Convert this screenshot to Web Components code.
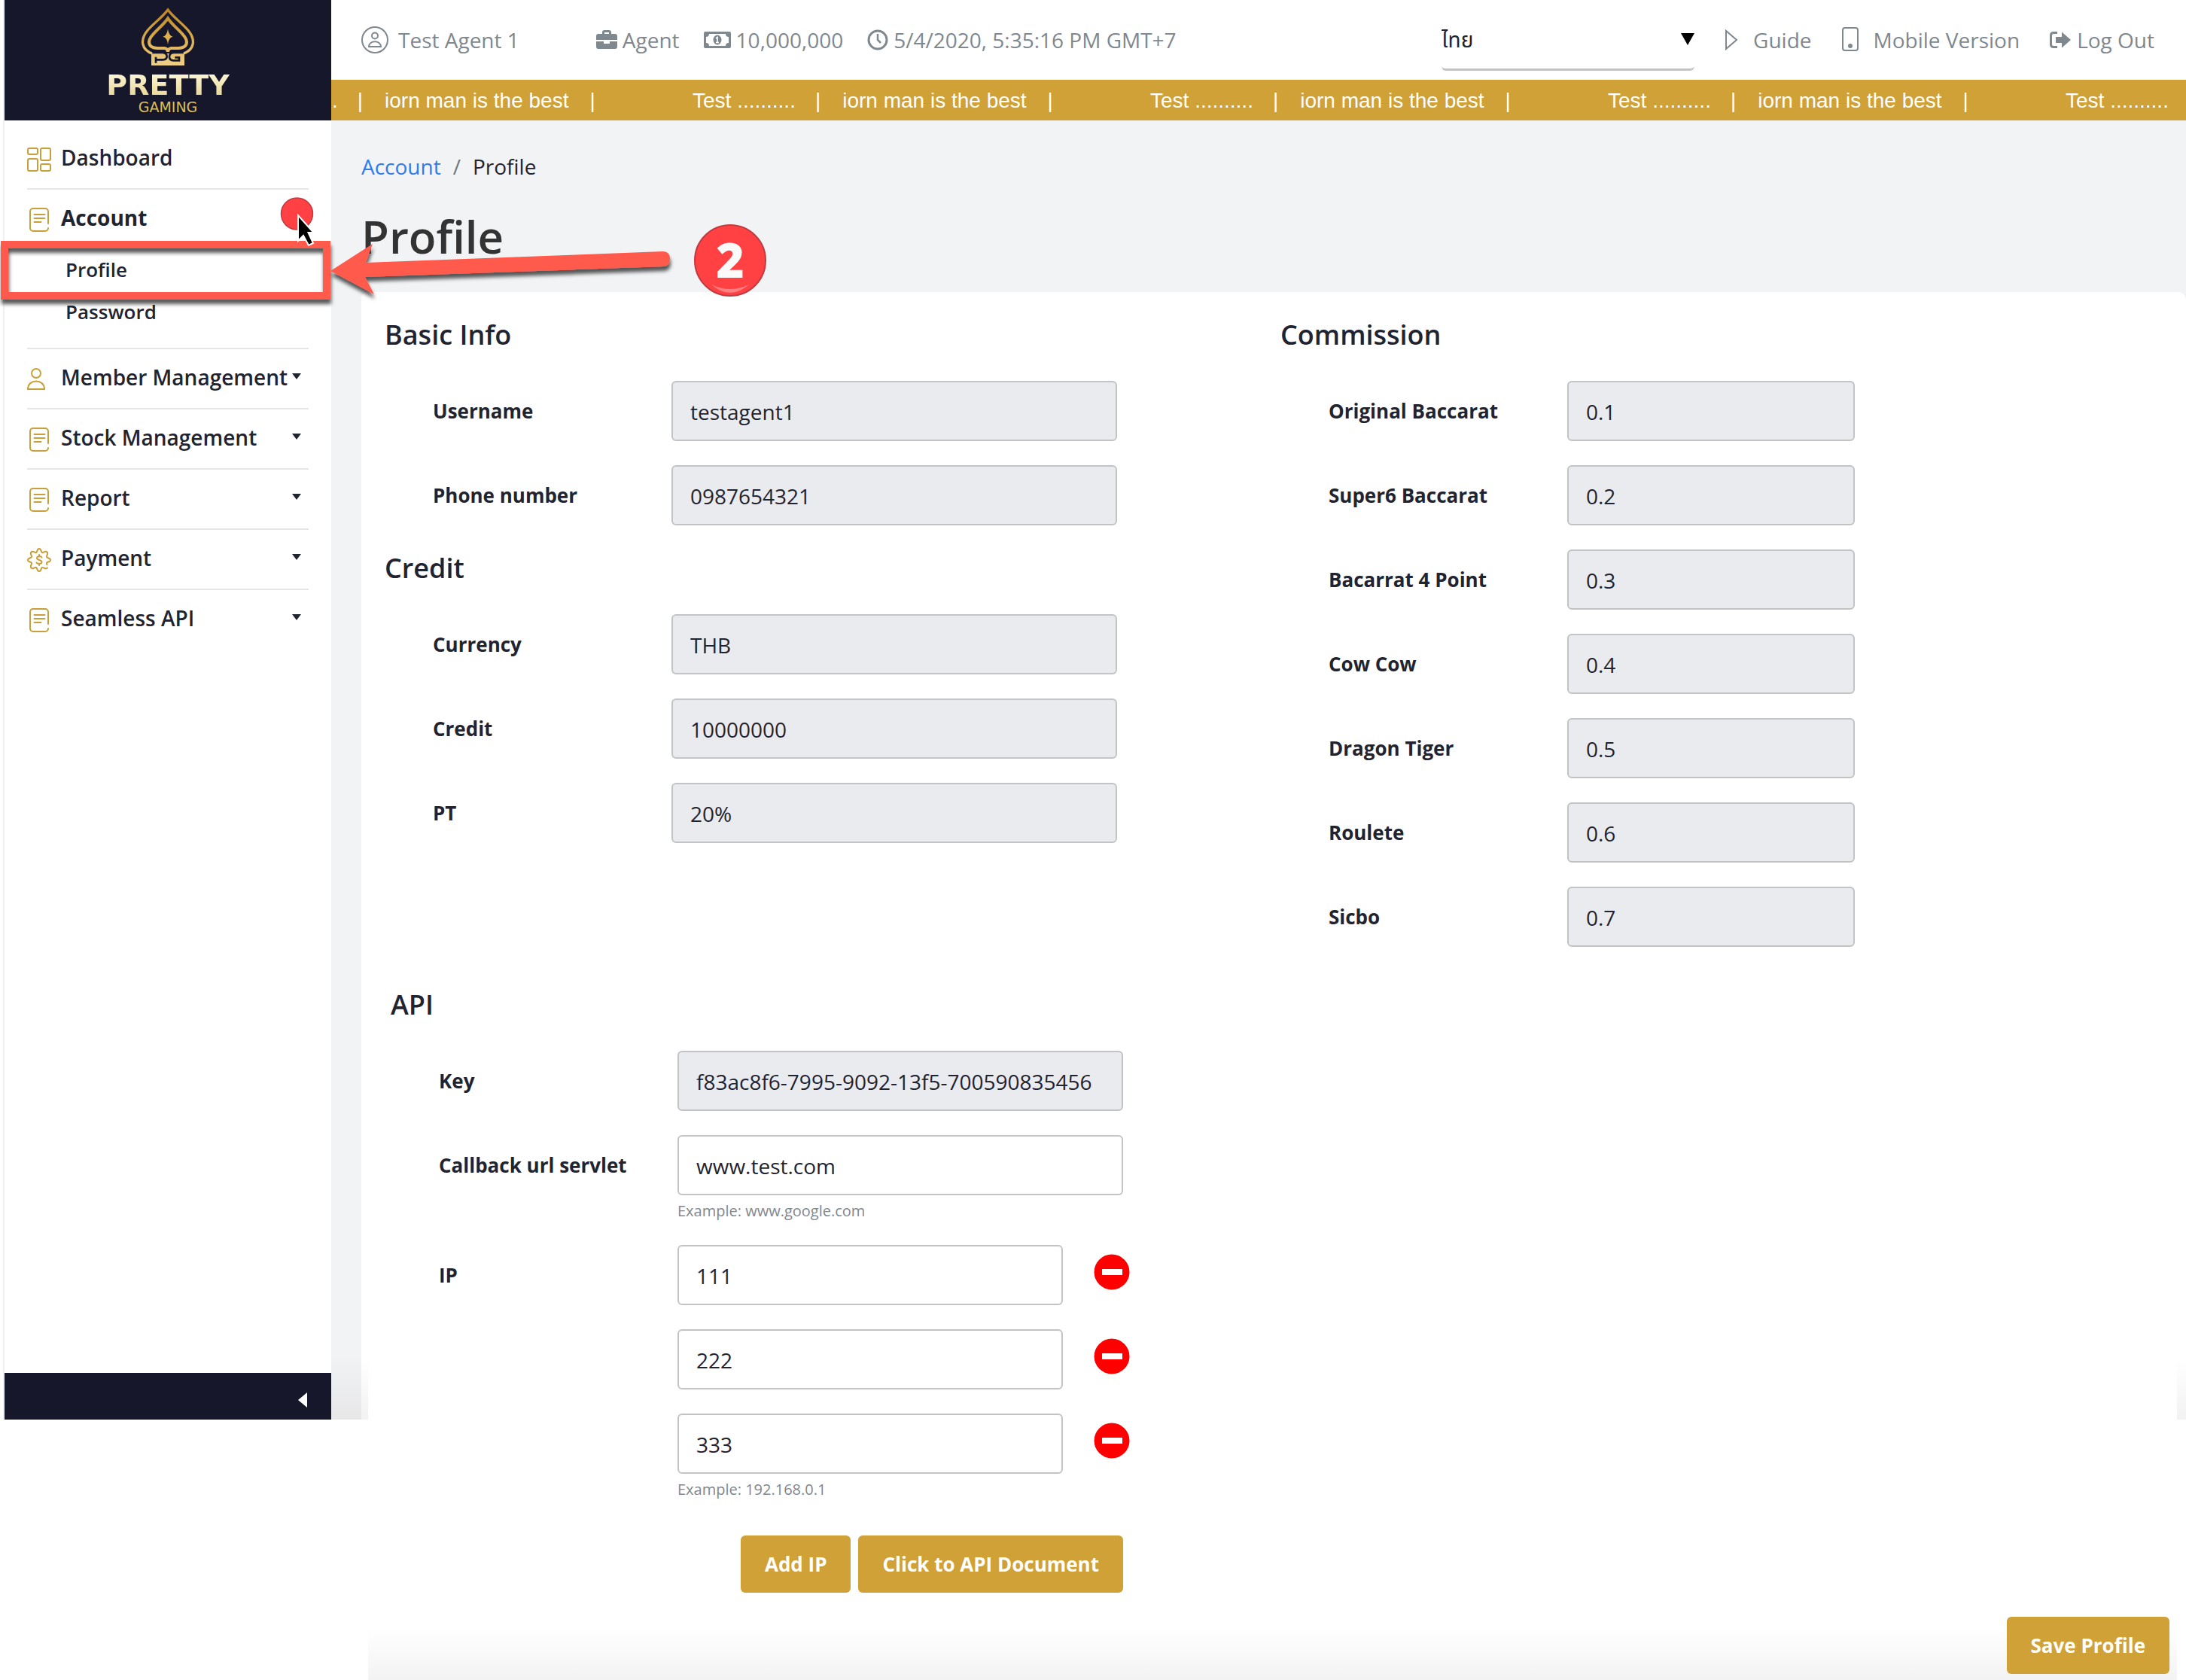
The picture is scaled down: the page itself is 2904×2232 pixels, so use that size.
<!DOCTYPE html>
<html lang="en">
<head>
<meta charset="utf-8">
<title>Pretty Gaming - Profile</title>
<style>
  html { background: #fff; }
  body {
    margin: 0;
    font-family: "Open Sans", "Noto Sans", sans-serif;
    font-size: 28px;
    color: #1f2430;
    --gold: #cfa137;
    --navy: #17172b;
    --muted: #7f888f;
    --canvas: #f1f3f5;
    --line: #c1c3c6;
    --fold: 1886px;
  }
</style>
</head>
<body>
<app-shell>
  <side-nav slot="nav">
    <nav-item icon="grid" label="Dashboard"></nav-item>
    <nav-item icon="doc" label="Account" active>
      <a href="#profile">Profile</a>
      <a href="#password">Password</a>
    </nav-item>
    <nav-item icon="user" label="Member Management" caret></nav-item>
    <nav-item icon="doc" label="Stock Management" caret></nav-item>
    <nav-item icon="doc" label="Report" caret></nav-item>
    <nav-item icon="gear" label="Payment" caret></nav-item>
    <nav-item icon="doc" label="Seamless API" caret></nav-item>
  </side-nav>
  <top-bar slot="top"></top-bar>
  <news-ticker slot="top"></news-ticker>
  <profile-page></profile-page>
</app-shell>
<step-callout></step-callout>

<script>
const define = (name, html, setup) => {
  const template = document.createElement('template');
  template.innerHTML = '<style>:host,*{box-sizing:border-box}</style>' + html;
  customElements.define(name, class extends HTMLElement {
    connectedCallback() {
      if (this.shadowRoot) return;
      const root = this.attachShadow({ mode: 'open' });
      root.append(template.content.cloneNode(true));
      if (setup) setup(this, root);
    }
  });
};

const icons = {
  grid: '<svg width="32" height="32" viewBox="0 0 32 32" fill="none" stroke="currentColor" stroke-width="2"><rect x="1" y="1" width="13" height="8" rx="2"/><rect x="18" y="1" width="13" height="16" rx="2"/><rect x="1" y="15" width="13" height="16" rx="2"/><rect x="18" y="22" width="13" height="9" rx="2"/></svg>',
  doc: '<svg width="32" height="32" viewBox="0 0 32 32" fill="none" stroke="currentColor" stroke-width="2" stroke-linecap="round"><path d="M28 21V5a4 4 0 0 0-4-4H8a4 4 0 0 0-4 4v22a4 4 0 0 0 4 4h16a4 4 0 0 0 4-4"/><path d="M9.500 9h14M9.500 14h14M9.500 19h9"/></svg>',
  user: '<svg width="32" height="32" viewBox="0 0 32 32" fill="none" stroke="currentColor" stroke-width="2"><circle cx="12" cy="8" r="6"/><path d="M1 29C1 15 23 15 23 29Z"/></svg>',
  gear: '<svg width="32" height="32" viewBox="0 0 32 32" fill="none" stroke="currentColor" stroke-width="2" stroke-linecap="round" stroke-linejoin="round"><path d="M27 26.500C24 29 22 25 20 26C18 27 19 31 16 31C13 31 14 27 12 26C10 25 8 29 5.500 26.500C3 24 7 22 6 20C5 18 1 19 1 16C1 13 5 14 6 12C7 10 3 8 5.500 5.500C8 3 10 7 12 6C14 5 13 1 16 1C19 1 18 5 20 6C22 7 24 3 26.500 5.500C29 8 25 10 26 12C27 14 31 13 31 16C31 19 27 18 26 20C25.500 21 26 21.500 26.500 22"/><path d="M19.500 12.500C18.500 10.500 13 10.500 13 13.500C13 16.500 19.500 15.500 19.500 18.700C19.500 21.700 13.500 21.700 12.500 19.500M16 9v2.500M16 20.500V23"/></svg>'
};

define('brand-logo', `
<style>
  :host { display: flex; flex-direction: column; align-items: center; height: 160px; padding-top: 9px; background: var(--navy); }
  svg { display: block; }
  b { font: bold 38px/40px "DejaVu Sans", sans-serif; margin-top: 5px;
      background: linear-gradient(#fffbe0, #e5d18a); -webkit-background-clip: text; background-clip: text; color: transparent; }
  span { font: 19px/18px "DejaVu Sans", sans-serif; color: #dbbd58; }
</style>
<svg width="74" height="79" viewBox="165 26 222 237" fill="none">
  <defs><linearGradient id="g" gradientUnits="userSpaceOnUse" x1="0" y1="30" x2="0" y2="260"><stop offset="0" stop-color="#bb8420"/><stop offset=".5" stop-color="#d8a94a"/><stop offset="1" stop-color="#efd287"/></linearGradient></defs>
  <path d="M276 38C254 68 221 90 196 119C163 158 171 198 215 213V255H337V213C381 198 389 158 356 119C331 90 298 68 276 38Z" stroke="url(#g)" stroke-width="10"/>
  <path d="M276 72C258 98 236 114 217 136C189 166 200 190 234 191H262Q276 193 276 206Q276 193 290 191H318C352 190 363 166 335 136C316 114 294 98 276 72Z" stroke="url(#g)" stroke-width="12"/>
  <path d="M212 212H340V258H212Z" fill="url(#g)"/>
  <path d="M214 209H256Q272 211 272 224Q272 237 256 237H228M228 226V250M338 209H298Q282 211 282 225Q282 240 298 240H321V228H304" stroke="#17172b" stroke-width="8"/>
  <path d="M276 114Q279 142 296 145Q279 148 276 176Q273 148 256 145Q273 142 276 114Z" fill="#e0b050"/>
</svg>
<b>PRETTY</b><span>GAMING</span>`);

define('nav-item', `
<style>
  :host { display: block; border-bottom: 2px solid #e6e6e6; }
  :host(:last-of-type) { border-bottom: 0; }
  .row { display: flex; align-items: center; height: 78px; color: inherit; text-decoration: none; font-weight: 600; padding-right: 10px; }
  :host([active]) .row { font-weight: 700; }
  .icon { width: 45px; height: 34px; padding-top: 2px; color: #c99f3a; }
  .icon svg { display: block; }
  .label { flex: 1; line-height: 74px; padding-bottom: 4px; white-space: nowrap; }
  .caret { display: none; padding-bottom: 6px; }
  :host([caret]) .caret { display: flex; }
  .sub { display: none; padding: 0 0 20px 51px; }
  :host([active]) .sub { display: block; }
  ::slotted(a) { display: block; font-size: 26px; line-height: 56px; font-weight: 600; color: inherit; text-decoration: none; }
</style>
<a class="row" href="#"><span class="icon"></span><span class="label"></span>
<span class="caret"><svg width="12" height="8" viewBox="0 0 12 8"><path d="M0 0H12L6 8Z" fill="#1f2430"/></svg></span></a>
<div class="sub"><slot></slot></div>`, (el, root) => {
  root.querySelector('.icon').innerHTML = icons[el.getAttribute('icon')];
  root.querySelector('.label').textContent = el.getAttribute('label');
});

define('side-nav', `
<style>
  :host { display: flex; flex-direction: column; min-height: var(--fold); margin-left: 4px; border-left: 2px solid #eef0f5; background: #fff; }
  nav { flex: 1; padding: 12px 30px 0; }
  footer { height: 62px; background: var(--navy); display: flex; align-items: center; justify-content: flex-end; padding: 10px 32px 0; }
  button { border: 0; background: none; padding: 0; display: flex; }
</style>
<brand-logo></brand-logo>
<nav><slot></slot></nav>
<footer><button aria-label="Collapse menu"><svg width="12" height="20" viewBox="0 0 12 20"><path d="M12 0V20L0 10Z" fill="#fff"/></svg></button></footer>`);

define('top-bar', `
<style>
  :host { display: flex; align-items: center; justify-content: space-between; height: 106px; background: #fff; color: var(--muted); padding: 0 42px 0 40px; white-space: nowrap; }
  .group { display: flex; align-items: center; }
  .info { gap: 32px; }
  .links { gap: 40px; }
  .item { display: flex; align-items: center; gap: 7px; color: inherit; text-decoration: none; }
  .links .item { gap: 8px; }
  .user { gap: 13px; margin-right: 70px; }
  .links .wide { gap: 20px; }
  svg { display: block; flex: none; }
  .pick { display: flex; align-items: center; height: 82px; width: 336px; border-bottom: 3px solid #c1c3c6; border-radius: 6px; }
  select { appearance: none; flex: 1; min-width: 0; height: 70px; border: 0; padding: 0; background: none; color: #1f2430; font: 28px "Open Sans", "Noto Sans Thai", "Liberation Sans", sans-serif; }
</style>
<div class="group info">
  <span class="item user"><svg width="36" height="36" viewBox="0 0 36 36" fill="none" stroke="currentColor" stroke-width="2"><circle cx="18" cy="18" r="17"/><circle cx="18" cy="12.500" r="4"/><path d="M10 27C10 18 26 18 26 27Z"/></svg>Test Agent 1</span>
  <span class="item"><svg width="28" height="26" viewBox="0 0 28 26" fill="currentColor"><path d="M8 5V3a3 3 0 0 1 3-3h6a3 3 0 0 1 3 3v2h5a3 3 0 0 1 3 3v5H0V8a3 3 0 0 1 3-3ZM11 5h6V3h-6ZM0 15h10v3h8v-3h10v7a3 3 0 0 1-3 3H3a3 3 0 0 1-3-3Z"/></svg>Agent</span>
  <span class="item"><svg width="36" height="22" viewBox="0 0 36 22"><path fill-rule="evenodd" d="M2 0H34a2 2 0 0 1 2 2V20a2 2 0 0 1-2 2H2a2 2 0 0 1-2-2V2a2 2 0 0 1 2-2ZM7 3Q7 7 3 7V15Q7 15 7 19H29Q29 15 33 15V7Q29 7 29 3Z" fill="currentColor"/><ellipse cx="18" cy="11" rx="5.500" ry="6.500" fill="currentColor"/><path d="M16 9L18 7.500V14M16 14.500H20" stroke="#fff" stroke-width="1.600" fill="none"/></svg>10,000,000</span>
  <span class="item"><svg width="28" height="28" viewBox="0 0 28 28" fill="none" stroke="currentColor" stroke-width="3"><circle cx="14" cy="14" r="12"/><path d="M14 6V14L18 18" stroke-width="2.500"/></svg>5/4/2020, 5:35:16 PM GMT+7</span>
</div>
<div class="group links">
  <span class="pick"><select aria-label="Language"><option>ไทย</option></select><svg width="18" height="18" viewBox="0 0 18 18"><path d="M0 1H18L9 17Z" fill="#000"/></svg></span>
  <a class="item wide" href="#guide"><svg width="18" height="30" viewBox="0 0 18 30" fill="none" stroke="currentColor" stroke-width="2"><path d="M2 3V27L16 15Z"/></svg>Guide</a>
  <a class="item wide" href="#mobile"><svg width="22" height="34" viewBox="0 0 22 34" fill="none" stroke="currentColor" stroke-width="2"><rect x="1" y="1" width="20" height="30" rx="3"/><circle cx="11" cy="25" r="2" fill="currentColor"/></svg>Mobile Version</a>
  <a class="item" href="#logout"><svg width="28" height="22" viewBox="0 0 28 22"><path d="M10 1.500H5Q1.500 1.500 1.500 5V17Q1.500 20.500 5 20.500H10" fill="none" stroke="currentColor" stroke-width="3"/><path d="M8 7H16V0.500L28 11L16 21.500V15H8Z" fill="currentColor"/></svg>Log Out</a>
</div>`);

define('news-ticker', `
<style>
  :host { display: flex; height: 54px; padding-top: 2px; overflow: hidden; background: var(--gold); color: #fff; font-family: "Liberation Sans", Arial, sans-serif; line-height: 52px; white-space: nowrap; }
  .track { display: flex; }
  .story { display: flex; flex: none; width: 608px; }
  .story:first-child { width: 480px; padding-left: 1px; }
  i { font-style: normal; padding: 0 29px 0 26px; }
  i:last-child { padding: 0 0 0 28px; }
</style>
<div class="track"></div>`, (el, root) => {
  const story = lead => `<div class="story"><span>${lead}</span><i>|</i><span>iorn man is the best</span><i>|</i></div>`;
  root.querySelector('.track').innerHTML =
    story('.') + story('Test ..........').repeat(3) + '<div class="story"><span>Test ..........</span></div>';
});

define('form-section', `
<style>
  :host { display: block; }
  h2 { margin: 0 0 36px; font-size: 36px; line-height: 50px; font-weight: 600; }
  .rows { display: flex; flex-direction: column; gap: 32px; padding-left: 64px; }
</style>
<h2></h2><div class="rows"><slot></slot></div>`, (el, root) => {
  root.querySelector('h2').textContent = el.getAttribute('heading');
});

define('form-field', `
<style>
  :host { display: flex; align-items: flex-start; }
  label { flex: none; width: 317px; font-size: 26px; line-height: 80px; font-weight: 700; }
  .box { flex: 0 1 var(--field-width, 592px); min-width: 0; }
  input { display: block; width: 100%; height: 80px; padding: 2px 23px 0; border: 2px solid var(--line); border-radius: 6px; background: #fff; font: inherit; color: inherit; }
  input:read-only { background: #e9ebef; }
  small { display: block; margin-top: 8px; font-size: 20px; line-height: 26px; color: var(--muted); }
  small:empty { display: none; }
  button { display: none; margin: 12px 0 0 41px; padding: 0; border: 0; background: none; }
  :host([removable]) button { display: block; }
  svg { display: block; }
</style>
<label for="control"></label>
<div class="box"><input id="control"><small></small></div>
<button aria-label="Remove IP"><svg width="48" height="48" viewBox="0 0 48 48"><circle cx="24" cy="24" r="23.500" fill="#f00"/><rect x="11" y="20" width="27" height="8" fill="#fff"/></svg></button>`, (el, root) => {
  const input = root.querySelector('input');
  root.querySelector('label').textContent = el.getAttribute('label') || '';
  if (!el.hasAttribute('label')) input.setAttribute('aria-label', 'IP');
  input.value = el.getAttribute('value');
  input.readOnly = el.hasAttribute('locked');
  root.querySelector('small').textContent = el.getAttribute('hint') || '';
});

define('gold-button', `
<style>
  :host { display: block; }
  button { display: block; height: 76px; padding: 0 32px; border: 0; border-radius: 6px; background: var(--gold); color: #fff; font: inherit; font-size: 26px; font-weight: 700; white-space: nowrap; }
</style>
<button type="button"><slot></slot></button>`);

define('profile-page', `
<style>
  :host { display: block; padding: 40px 0 0 40px; background: linear-gradient(var(--canvas), var(--canvas) 1640px, #e7e7e8) no-repeat 0 0 / 100% calc(var(--fold) - 160px); }
  .crumbs { display: flex; gap: 16px; line-height: 42px; }
  .crumbs a { color: #2f7bea; text-decoration: none; }
  .crumbs i { font-style: normal; color: #6f7780; }
  h1 { margin: 36px 0 38px; font-size: 60px; line-height: 72px; font-weight: 600; color: #333; }
  .card { border-radius: 8px 10px 0 0; padding: 32px 13px 8px 31px;
    background:
      linear-gradient(#fff, #f2f2f2) no-repeat 0 1418px / 9px 80px,
      linear-gradient(#fff, #f2f2f2) no-repeat 100% 1418px / 12px 80px,
      linear-gradient(#fff, #f3f3f3) no-repeat 9px 100% / calc(100% - 21px) 70px,
      #fff; }
  .columns { display: grid; grid-template-columns: 1fr 1fr; }
  .stack { display: flex; flex-direction: column; gap: 32px; }
  .narrow { --field-width: 382px; }
  .api { padding: 52px 0 0 8px; }
  .ip { --field-width: 512px; }
  .actions { display: flex; justify-content: flex-end; gap: 10px; max-width: 909px; margin-top: 16px; }
  .save { display: flex; justify-content: flex-end; padding: 32px 9px 0 0; }
</style>
<nav class="crumbs"><a href="#account">Account</a><i>/</i><span>Profile</span></nav>
<h1>Profile</h1>
<div class="card">
  <div class="columns">
    <div class="stack">
      <form-section heading="Basic Info">
        <form-field label="Username" value="testagent1" locked></form-field>
        <form-field label="Phone number" value="0987654321" locked></form-field>
      </form-section>
      <form-section heading="Credit">
        <form-field label="Currency" value="THB" locked></form-field>
        <form-field label="Credit" value="10000000" locked></form-field>
        <form-field label="PT" value="20%" locked></form-field>
      </form-section>
    </div>
    <form-section heading="Commission" class="narrow">
      <form-field label="Original Baccarat" value="0.1" locked></form-field>
      <form-field label="Super6 Baccarat" value="0.2" locked></form-field>
      <form-field label="Bacarrat 4 Point" value="0.3" locked></form-field>
      <form-field label="Cow Cow" value="0.4" locked></form-field>
      <form-field label="Dragon Tiger" value="0.5" locked></form-field>
      <form-field label="Roulete" value="0.6" locked></form-field>
      <form-field label="Sicbo" value="0.7" locked></form-field>
    </form-section>
  </div>
  <form-section heading="API" class="api">
    <form-field label="Key" value="f83ac8f6-7995-9092-13f5-700590835456" locked></form-field>
    <form-field label="Callback url servlet" value="www.test.com" hint="Example: www.google.com"></form-field>
    <form-field class="ip" label="IP" value="111" removable></form-field>
    <form-field class="ip" value="222" removable></form-field>
    <form-field class="ip" value="333" hint="Example: 192.168.0.1" removable></form-field>
    <div class="actions"><gold-button>Add IP</gold-button><gold-button>Click to API Document</gold-button></div>
  </form-section>
  <div class="save"><gold-button>Save Profile</gold-button></div>
</div>`);

define('app-shell', `
<style>
  :host { display: grid; grid-template-columns: 440px minmax(0, 1fr); align-items: start; }
</style>
<slot name="nav"></slot>
<main><slot name="top"></slot><slot></slot></main>`);

/* Tutorial marks that lie over the page: highlight frame, arrow, step badges and pointer. */
define('step-callout', `
<style>
  :host { position: absolute; left: 0; top: 0; pointer-events: none; }
  svg { display: block; }
  text { font: 800 64px "Open Sans", sans-serif; }
</style>
<svg width="1040" height="420" viewBox="0 0 1040 420">
  <defs><filter id="s" x="-10%" y="-30%" width="120%" height="180%"><feDropShadow dx="1" dy="6" stdDeviation="2.500" flood-color="#000" flood-opacity=".65"/></filter></defs>
  <circle cx="394.500" cy="284" r="21" fill="#ff4144" stroke="#c03a40" stroke-width="1.500"/>
  <rect x="6" y="325" width="428" height="68" fill="none" stroke="#ff5a4c" stroke-width="10" filter="url(#s)"/>
  <path d="M396 286V320L403 313L410 326L416 323L409.500 309H416.500Z" fill="#000" stroke="#fff" stroke-width="2"/>
  <path d="M439 360L495 324L486 349L881 334Q890 334 890 344Q890 353 882 354L485 368L497 391Z" fill="#ff5a4c" filter="url(#s)"/>
  <circle cx="970" cy="346" r="47" fill="#ff4144" stroke="#c03a40" stroke-width="2"/>
  <path d="M945 378Q970 400 995 378Q970 390 945 378Z" fill="#ff7f80"/>
  <text x="970" y="369" text-anchor="middle" fill="#fafafa">2</text>
</svg>`);
</script>
</body>
</html>
